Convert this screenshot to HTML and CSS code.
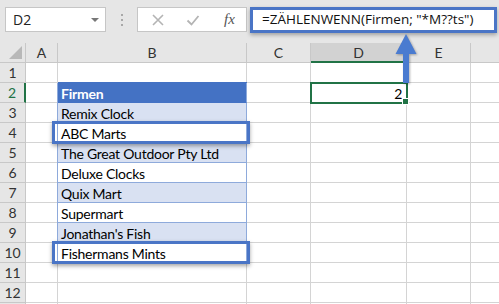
FILE: index.html
```html
<!DOCTYPE html>
<html lang="de">
<head>
    <meta charset="UTF-8">
    <title>ZÄHLENWENN</title>
    <link rel="stylesheet" href="styles.css">
</head>
<body>
<div class="page">
    <div class="bar">
        <div class="namebox"><span>D2</span><span class="caret"></span></div>
        <div class="grip"><i></i><i></i><i></i></div>
        <div class="fxbtns">
            <svg width="14" height="14" viewBox="0 0 14 14"><path d="M2 2 L12 12 M12 2 L2 12" stroke="#b4b4b4" stroke-width="1.6" fill="none"/></svg>
            <svg width="14" height="14" viewBox="0 0 14 14"><path d="M1.5 7.5 L5.5 11.5 L12.5 3" stroke="#b4b4b4" stroke-width="1.8" fill="none"/></svg>
            <span class="fx">fx</span>
        </div>
        <div class="formula">=ZÄHLENWENN(Firmen; "*M??ts")</div>
    </div>

    <div class="sheet">
        <div class="corner"><span class="tri"></span></div>
        <div class="ch">A</div><div class="ch">B</div><div class="ch">C</div><div class="ch active">D</div><div class="ch">E</div><div class="ch"></div>

        <div class="rh">1</div><div class="c"></div><div class="c"></div><div class="c"></div><div class="c"></div><div class="c"></div><div class="c"></div>
        <div class="rh active">2</div><div class="c"></div><div class="c tb head">Firmen</div><div class="c"></div><div class="c num sel">2<span class="handle"></span></div><div class="c"></div><div class="c"></div>
        <div class="rh">3</div><div class="c"></div><div class="c tb band">Remix Clock</div><div class="c"></div><div class="c"></div><div class="c"></div><div class="c"></div>
        <div class="rh">4</div><div class="c"></div><div class="c tb">ABC Marts<span class="mark"></span></div><div class="c"></div><div class="c"></div><div class="c"></div><div class="c"></div>
        <div class="rh">5</div><div class="c"></div><div class="c tb band">The Great Outdoor Pty Ltd</div><div class="c"></div><div class="c"></div><div class="c"></div><div class="c"></div>
        <div class="rh">6</div><div class="c"></div><div class="c tb">Deluxe Clocks</div><div class="c"></div><div class="c"></div><div class="c"></div><div class="c"></div>
        <div class="rh">7</div><div class="c"></div><div class="c tb band">Quix Mart</div><div class="c"></div><div class="c"></div><div class="c"></div><div class="c"></div>
        <div class="rh">8</div><div class="c"></div><div class="c tb">Supermart</div><div class="c"></div><div class="c"></div><div class="c"></div><div class="c"></div>
        <div class="rh">9</div><div class="c"></div><div class="c tb band">Jonathan's Fish</div><div class="c"></div><div class="c"></div><div class="c"></div><div class="c"></div>
        <div class="rh">10</div><div class="c"></div><div class="c tb">Fishermans Mints<span class="mark"></span></div><div class="c"></div><div class="c"></div><div class="c"></div><div class="c"></div>
        <div class="rh">11</div><div class="c"></div><div class="c"></div><div class="c"></div><div class="c"></div><div class="c"></div><div class="c"></div>
        <div class="rh">12</div><div class="c"></div><div class="c"></div><div class="c"></div><div class="c"></div><div class="c"></div><div class="c"></div>
        <div class="rh"></div><div class="c"></div><div class="c"></div><div class="c"></div><div class="c"></div><div class="c"></div><div class="c"></div>
    </div>

    <svg class="arrow" width="26" height="52" viewBox="0 0 26 52">
        <path d="M13 1 L23.5 21 L16 21 L16 50 L10 50 L10 21 L2.5 21 Z" fill="#4a7bd0"/>
    </svg>
</div>
</body>
</html>
```

FILE: styles.css
```css
body {
    margin: 0;
    font-family: Lato, "Liberation Sans", sans-serif;
    background: #fff;
    overflow: hidden;
}
.page {
    position: relative;
    width: 499px;
    height: 304px;
    overflow: hidden;
}

/* formula bar */
.bar {
    height: 43px;
    background: #e6e6e6;
    display: flex;
    align-items: flex-start;
    padding-top: 7px;
    padding-left: 5px;
    box-sizing: border-box;
}
.namebox {
    width: 101px;
    height: 25px;
    box-sizing: border-box;
    background: #fff;
    border: 1px solid #c6c6c6;
    display: flex;
    align-items: center;
    justify-content: space-between;
    padding: 0 6px 0 7px;
    font-family: "Open Sans", sans-serif;
    font-size: 14px;
    color: #222;
}
.caret {
    width: 0;
    height: 0;
    border-left: 4px solid transparent;
    border-right: 4px solid transparent;
    border-top: 4px solid #777;
}
.grip {
    width: 31px;
    height: 25px;
    display: flex;
    flex-direction: column;
    align-items: center;
    justify-content: center;
    gap: 3px;
}
.grip i {
    width: 2px;
    height: 2px;
    background: #a8a8a8;
}
.fxbtns {
    width: 110px;
    height: 25px;
    box-sizing: border-box;
    background: #fff;
    border: 1px solid #c6c6c6;
    display: flex;
    align-items: center;
    padding-left: 13px;
    gap: 21px;
}
.fx {
    font-family: "Liberation Serif", serif;
    font-style: italic;
    font-size: 15px;
    color: #555;
    margin-left: 3px;
}
.formula {
    margin-left: 3px;
    width: 247px;
    height: 26px;
    box-sizing: border-box;
    border: 3px solid #4a75c6;
    background: #fff;
    box-shadow: 0 2px 4px rgba(0, 0, 0, 0.3);
    padding-left: 9px;
    font-family: "Open Sans", sans-serif;
    font-size: 13.5px;
    line-height: 19px;
    color: #111;
    white-space: nowrap;
    position: relative;
    z-index: 2;
}

/* grid */
.sheet {
    display: grid;
    grid-template-columns: 26px 32px 189px 64px 96px 64px 40px;
    grid-auto-rows: 20px;
}
.sheet > div {
    box-sizing: border-box;
    border-right: 1px solid #d4d4d4;
    border-bottom: 1px solid #d4d4d4;
}
.corner, .ch, .rh {
    background: #e6e6e6;
    border-color: #c8c8c8 !important;
    color: #333;
    font-size: 14px;
    display: flex;
    align-items: center;
    justify-content: center;
}
.corner {
    position: relative;
}
.tri {
    position: absolute;
    right: 3px;
    bottom: 3px;
    width: 0;
    height: 0;
    border-left: 13px solid transparent;
    border-bottom: 13px solid #b8b8b8;
}
.ch.active {
    background: #d2d2d2;
    border-bottom: 2px solid #217346 !important;
}
.rh.active {
    border-right: 2px solid #217346 !important;
    color: #217346;
}
.c {
    font-size: 14px;
    letter-spacing: -0.25px;
    line-height: 21px;
    padding-left: 3px;
    white-space: nowrap;
    color: #000;
    position: relative;
}
.tb {
    border-right-color: #8eaadb !important;
    border-bottom-color: #8eaadb !important;
    box-shadow: -1px 0 0 #8eaadb;
}
.tb.head {
    background: #4472c4;
    color: #fff;
    font-weight: bold;
    border-bottom-color: #4472c4 !important;
    box-shadow: -1px 0 0 #8eaadb, 0 -1px 0 #4472c4;
}
.tb.band {
    background: #d9e1f2;
}
.num {
    text-align: right;
    padding-right: 4px;
}
.sel {
    outline: 2px solid #217346;
    outline-offset: -1px;
    z-index: 1;
}
.handle {
    position: absolute;
    right: -3px;
    bottom: -3px;
    width: 5px;
    height: 5px;
    background: #217346;
    border: 1px solid #fff;
}
.mark {
    position: absolute;
    left: -6px;
    right: -4px;
    top: -2px;
    bottom: -2px;
    border: 3px solid #4a75c6;
    box-shadow: 0 2px 4px rgba(0, 0, 0, 0.35);
    z-index: 1;
}

.arrow {
    position: absolute;
    left: 393px;
    top: 33px;
    z-index: 3;
    filter: drop-shadow(1px 1px 1px rgba(0, 0, 0, 0.3));
}
```
